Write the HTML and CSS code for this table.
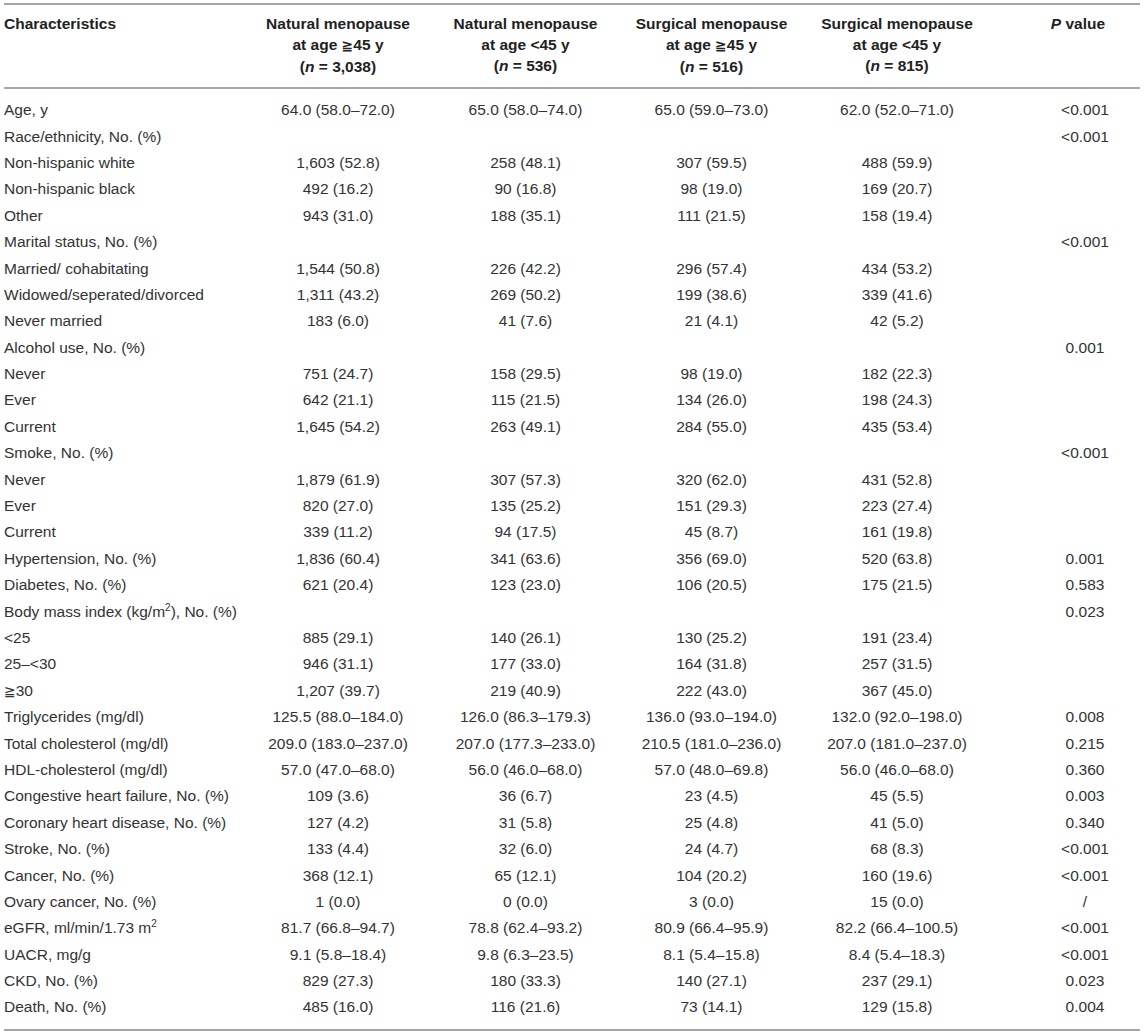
FILE: index.html
```html
<!DOCTYPE html>
<html>
<head>
<meta charset="utf-8">
<link rel="stylesheet" href="styles.css">
</head>
<body>
<div class="table">
  <div class="head">
    <div class="hc first">Characteristics</div>
    <div class="hc">Natural menopause<br>at age <span class="ge">≧</span>45 y<br>(<i>n</i> = 3,038)</div>
    <div class="hc">Natural menopause<br>at age &lt;45 y<br>(<i>n</i> = 536)</div>
    <div class="hc">Surgical menopause<br>at age <span class="ge">≧</span>45 y<br>(<i>n</i> = 516)</div>
    <div class="hc">Surgical menopause<br>at age &lt;45 y<br>(<i>n</i> = 815)</div>
    <div class="hc pv"><i>P</i> value</div>
  </div>
  <div class="body">
    <div class="row"><div class="lab">Age, y</div><div>64.0 (58.0–72.0)</div><div>65.0 (58.0–74.0)</div><div>65.0 (59.0–73.0)</div><div>62.0 (52.0–71.0)</div><div class="pv">&lt;0.001</div></div>
    <div class="row"><div class="lab">Race/ethnicity, No. (%)</div><div></div><div></div><div></div><div></div><div class="pv">&lt;0.001</div></div>
    <div class="row"><div class="lab">Non-hispanic white</div><div>1,603 (52.8)</div><div>258 (48.1)</div><div>307 (59.5)</div><div>488 (59.9)</div><div class="pv"></div></div>
    <div class="row"><div class="lab">Non-hispanic black</div><div>492 (16.2)</div><div>90 (16.8)</div><div>98 (19.0)</div><div>169 (20.7)</div><div class="pv"></div></div>
    <div class="row"><div class="lab">Other</div><div>943 (31.0)</div><div>188 (35.1)</div><div>111 (21.5)</div><div>158 (19.4)</div><div class="pv"></div></div>
    <div class="row"><div class="lab">Marital status, No. (%)</div><div></div><div></div><div></div><div></div><div class="pv">&lt;0.001</div></div>
    <div class="row"><div class="lab">Married/ cohabitating</div><div>1,544 (50.8)</div><div>226 (42.2)</div><div>296 (57.4)</div><div>434 (53.2)</div><div class="pv"></div></div>
    <div class="row"><div class="lab">Widowed/seperated/divorced</div><div>1,311 (43.2)</div><div>269 (50.2)</div><div>199 (38.6)</div><div>339 (41.6)</div><div class="pv"></div></div>
    <div class="row"><div class="lab">Never married</div><div>183 (6.0)</div><div>41 (7.6)</div><div>21 (4.1)</div><div>42 (5.2)</div><div class="pv"></div></div>
    <div class="row"><div class="lab">Alcohol use, No. (%)</div><div></div><div></div><div></div><div></div><div class="pv">0.001</div></div>
    <div class="row"><div class="lab">Never</div><div>751 (24.7)</div><div>158 (29.5)</div><div>98 (19.0)</div><div>182 (22.3)</div><div class="pv"></div></div>
    <div class="row"><div class="lab">Ever</div><div>642 (21.1)</div><div>115 (21.5)</div><div>134 (26.0)</div><div>198 (24.3)</div><div class="pv"></div></div>
    <div class="row"><div class="lab">Current</div><div>1,645 (54.2)</div><div>263 (49.1)</div><div>284 (55.0)</div><div>435 (53.4)</div><div class="pv"></div></div>
    <div class="row"><div class="lab">Smoke, No. (%)</div><div></div><div></div><div></div><div></div><div class="pv">&lt;0.001</div></div>
    <div class="row"><div class="lab">Never</div><div>1,879 (61.9)</div><div>307 (57.3)</div><div>320 (62.0)</div><div>431 (52.8)</div><div class="pv"></div></div>
    <div class="row"><div class="lab">Ever</div><div>820 (27.0)</div><div>135 (25.2)</div><div>151 (29.3)</div><div>223 (27.4)</div><div class="pv"></div></div>
    <div class="row"><div class="lab">Current</div><div>339 (11.2)</div><div>94 (17.5)</div><div>45 (8.7)</div><div>161 (19.8)</div><div class="pv"></div></div>
    <div class="row"><div class="lab">Hypertension, No. (%)</div><div>1,836 (60.4)</div><div>341 (63.6)</div><div>356 (69.0)</div><div>520 (63.8)</div><div class="pv">0.001</div></div>
    <div class="row"><div class="lab">Diabetes, No. (%)</div><div>621 (20.4)</div><div>123 (23.0)</div><div>106 (20.5)</div><div>175 (21.5)</div><div class="pv">0.583</div></div>
    <div class="row"><div class="lab">Body mass index (kg/m<sup>2</sup>), No. (%)</div><div></div><div></div><div></div><div></div><div class="pv">0.023</div></div>
    <div class="row"><div class="lab">&lt;25</div><div>885 (29.1)</div><div>140 (26.1)</div><div>130 (25.2)</div><div>191 (23.4)</div><div class="pv"></div></div>
    <div class="row"><div class="lab">25–&lt;30</div><div>946 (31.1)</div><div>177 (33.0)</div><div>164 (31.8)</div><div>257 (31.5)</div><div class="pv"></div></div>
    <div class="row"><div class="lab"><span class="ge">≧</span>30</div><div>1,207 (39.7)</div><div>219 (40.9)</div><div>222 (43.0)</div><div>367 (45.0)</div><div class="pv"></div></div>
    <div class="row"><div class="lab">Triglycerides (mg/dl)</div><div>125.5 (88.0–184.0)</div><div>126.0 (86.3–179.3)</div><div>136.0 (93.0–194.0)</div><div>132.0 (92.0–198.0)</div><div class="pv">0.008</div></div>
    <div class="row"><div class="lab">Total cholesterol (mg/dl)</div><div>209.0 (183.0–237.0)</div><div>207.0 (177.3–233.0)</div><div>210.5 (181.0–236.0)</div><div>207.0 (181.0–237.0)</div><div class="pv">0.215</div></div>
    <div class="row"><div class="lab">HDL-cholesterol (mg/dl)</div><div>57.0 (47.0–68.0)</div><div>56.0 (46.0–68.0)</div><div>57.0 (48.0–69.8)</div><div>56.0 (46.0–68.0)</div><div class="pv">0.360</div></div>
    <div class="row"><div class="lab">Congestive heart failure, No. (%)</div><div>109 (3.6)</div><div>36 (6.7)</div><div>23 (4.5)</div><div>45 (5.5)</div><div class="pv">0.003</div></div>
    <div class="row"><div class="lab">Coronary heart disease, No. (%)</div><div>127 (4.2)</div><div>31 (5.8)</div><div>25 (4.8)</div><div>41 (5.0)</div><div class="pv">0.340</div></div>
    <div class="row"><div class="lab">Stroke, No. (%)</div><div>133 (4.4)</div><div>32 (6.0)</div><div>24 (4.7)</div><div>68 (8.3)</div><div class="pv">&lt;0.001</div></div>
    <div class="row"><div class="lab">Cancer, No. (%)</div><div>368 (12.1)</div><div>65 (12.1)</div><div>104 (20.2)</div><div>160 (19.6)</div><div class="pv">&lt;0.001</div></div>
    <div class="row"><div class="lab">Ovary cancer, No. (%)</div><div>1 (0.0)</div><div>0 (0.0)</div><div>3 (0.0)</div><div>15 (0.0)</div><div class="pv">/</div></div>
    <div class="row"><div class="lab">eGFR, ml/min/1.73 m<sup>2</sup></div><div>81.7 (66.8–94.7)</div><div>78.8 (62.4–93.2)</div><div>80.9 (66.4–95.9)</div><div>82.2 (66.4–100.5)</div><div class="pv">&lt;0.001</div></div>
    <div class="row"><div class="lab">UACR, mg/g</div><div>9.1 (5.8–18.4)</div><div>9.8 (6.3–23.5)</div><div>8.1 (5.4–15.8)</div><div>8.4 (5.4–18.3)</div><div class="pv">&lt;0.001</div></div>
    <div class="row"><div class="lab">CKD, No. (%)</div><div>829 (27.3)</div><div>180 (33.3)</div><div>140 (27.1)</div><div>237 (29.1)</div><div class="pv">0.023</div></div>
    <div class="row"><div class="lab">Death, No. (%)</div><div>485 (16.0)</div><div>116 (21.6)</div><div>73 (14.1)</div><div>129 (15.8)</div><div class="pv">0.004</div></div>
  </div>
</div>
</body>
</html>
```
FILE: styles.css
```css
html, body {
  margin: 0;
  padding: 0;
  background: #ffffff;
}
body {
  font-family: "Liberation Sans", Arial, sans-serif;
  font-size: 15.5px;
  color: #333333;
}
.table {
  margin: 3px 0 0 4px;
  width: 1136px;
}
.head, .row {
  display: grid;
  grid-template-columns: 240px 188px 187px 185px 186px 150px;
}
.head {
  border-top: 2px solid #a6a6a6;
  border-bottom: 2px solid #a6a6a6;
  padding: 8px 0 10px;
  line-height: 21px;
  font-weight: bold;
  color: #222222;
}
.hc {
  text-align: center;
}
.hc.first {
  text-align: left;
}
.hc.pv {
  padding-left: 26px;
}
.body {
  padding: 8px 0;
  border-bottom: 2px solid #a6a6a6;
}
.row {
  height: 26.4px;
  align-items: center;
  text-align: center;
  white-space: nowrap;
}
.row .lab {
  text-align: left;
}
.row .pv {
  padding-left: 40px;
}
sup {
  font-size: 10px;
  line-height: 0;
  vertical-align: 6px;
}
.ge {
  font-family: "DejaVu Sans", sans-serif;
  font-size: 14px;
}
```
